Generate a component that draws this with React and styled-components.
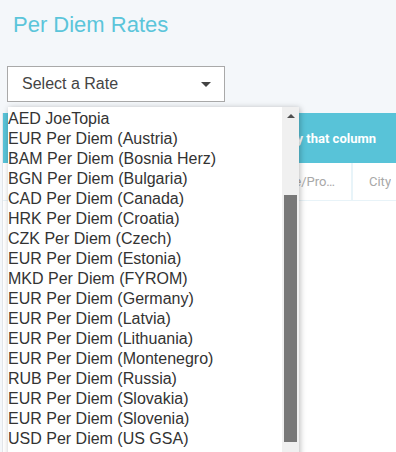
import React from "react";
import styled, { createGlobalStyle } from "styled-components";

const rates = [
  "AED JoeTopia",
  "EUR Per Diem (Austria)",
  "BAM Per Diem (Bosnia Herz)",
  "BGN Per Diem (Bulgaria)",
  "CAD Per Diem (Canada)",
  "HRK Per Diem (Croatia)",
  "CZK Per Diem (Czech)",
  "EUR Per Diem (Estonia)",
  "MKD Per Diem (FYROM)",
  "EUR Per Diem (Germany)",
  "EUR Per Diem (Latvia)",
  "EUR Per Diem (Lithuania)",
  "EUR Per Diem (Montenegro)",
  "RUB Per Diem (Russia)",
  "EUR Per Diem (Slovakia)",
  "EUR Per Diem (Slovenia)",
  "USD Per Diem (US GSA)",
];

const columns = [
  { title: "Rate Name", width: 126 },
  { title: "Country", width: 126 },
  { title: "State/Province", width: 98 },
  { title: "City", width: 150 },
];

function App() {
  return (
    <Page>
      <GlobalStyle />
      <Title>Per Diem Rates</Title>
      <SelectWrap>
        <SelectBox>
          <span>Select a Rate</span>
          <Caret />
        </SelectBox>
        <Dropdown>
          <Options>
            {rates.map((rate, i) => (
              <Option key={i}>{rate}</Option>
            ))}
          </Options>
          <Track>
            <UpArrow />
            <Thumb />
          </Track>
        </Dropdown>
      </SelectWrap>
      <Grid>
        <GroupBand>
          <span>Drag a column header and drop it here to group by that column</span>
        </GroupBand>
        <HeaderRow>
          {columns.map((col) => (
            <HeaderCell key={col.title} $width={col.width}>
              <CellText>{col.title}</CellText>
            </HeaderCell>
          ))}
        </HeaderRow>
      </Grid>
    </Page>
  );
}

const GlobalStyle = createGlobalStyle`
  html, body {
    margin: 0;
    height: 100%;
    overflow: hidden;
    background: #f4f7fa;
    font-family: "Liberation Sans", Arial, sans-serif;
  }
  #root {
    height: 100%;
  }
`;

const Page = styled.div`
  height: 100%;
  display: flex;
  flex-direction: column;
  padding-left: 2px;
  box-sizing: border-box;
`;

const Title = styled.h1`
  margin: 12px 0 0 11px;
  font-size: 22px;
  line-height: 26px;
  font-weight: normal;
  color: #5bc5da;
`;

const SelectWrap = styled.div`
  position: relative;
  margin: 28px 0 0 5px;
  width: 218px;
`;

const SelectBox = styled.div`
  height: 36px;
  box-sizing: border-box;
  border: 1px solid #a9a9a9;
  background: #fff;
  display: flex;
  align-items: center;
  justify-content: space-between;
  padding: 0 13px 0 14px;
  font-size: 16px;
  color: #444;
`;

const Caret = styled.span`
  width: 0;
  height: 0;
  border-left: 5px solid transparent;
  border-right: 5px solid transparent;
  border-top: 5px solid #444;
  margin-top: 1px;
`;

const Dropdown = styled.div`
  position: absolute;
  top: 41px;
  left: 1px;
  width: 291px;
  height: 360px;
  background: #fff;
  box-shadow: 1px 1px 6px rgba(0, 0, 0, 0.28);
  display: flex;
  z-index: 5;
`;

const Options = styled.ul`
  list-style: none;
  margin: 0;
  padding: 2px 0 0 0;
  flex: 1;
  overflow: hidden;
`;

const Option = styled.li`
  font-size: 16px;
  line-height: 20px;
  color: #333;
  white-space: nowrap;
`;

const Track = styled.div`
  width: 17px;
  background: #f0f0f0;
  display: flex;
  flex-direction: column;
  align-items: center;
  padding-top: 7px;
  box-sizing: border-box;
`;

const UpArrow = styled.span`
  width: 0;
  height: 0;
  border-left: 4px solid transparent;
  border-right: 4px solid transparent;
  border-bottom: 4px solid #505050;
`;

const Thumb = styled.div`
  width: 13px;
  height: 247px;
  margin-top: 77px;
  background: #787878;
`;

const Grid = styled.div`
  margin-top: 11px;
  flex: 1;
  background: #fff;
  border-left: 1px solid #e3e6ea;
  font-family: Roboto, "Liberation Sans", sans-serif;
  overflow: hidden;
`;

const GroupBand = styled.div`
  height: 50px;
  background: #58c3d8;
  color: #fff;
  font-size: 13px;
  font-weight: bold;
  display: flex;
  align-items: center;
  justify-content: flex-end;
  padding-right: 20px;
  white-space: nowrap;
  overflow: hidden;
`;

const HeaderRow = styled.div`
  display: flex;
  height: 37px;
  border-bottom: 1px solid #e8f3f8;
`;

const HeaderCell = styled.div`
  flex: 0 0 ${(p) => p.$width}px;
  box-sizing: border-box;
  padding: 0 14px 0 16px;
  border-right: 2px solid #e8f4f9;
  display: flex;
  align-items: center;
  font-size: 13px;
  color: #a8a8a8;
  min-width: 0;
`;

const CellText = styled.span`
  display: block;
  min-width: 0;
  white-space: nowrap;
  overflow: hidden;
  text-overflow: ellipsis;
`;

export default App;
